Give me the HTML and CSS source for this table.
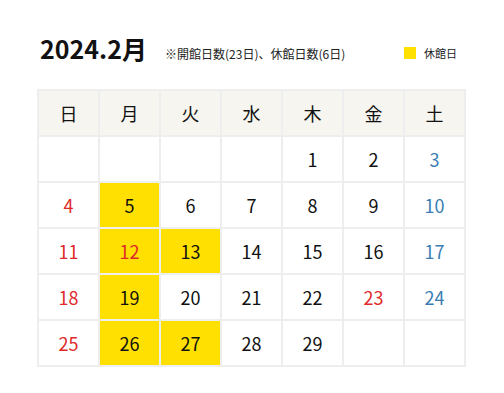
FILE: index.html
```html
<!DOCTYPE html>
<html lang="ja">
<head>
<meta charset="utf-8">
<link rel="stylesheet" href="styles.css">
</head>
<body>
<div class="cal">
  <div class="cal-head">
    <h1 class="cal-title">2024.2月</h1>
    <p class="cal-note">※開館日数(23日)、休館日数(6日)</p>
    <div class="legend"><span class="legend-box"></span><span>休館日</span></div>
  </div>
  <table class="grid">
    <thead>
      <tr><th>日</th><th>月</th><th>火</th><th>水</th><th>木</th><th>金</th><th>土</th></tr>
    </thead>
    <tbody>
      <tr><td></td><td></td><td></td><td></td><td>1</td><td>2</td><td class="sat">3</td></tr>
      <tr><td class="sun">4</td><td class="closed">5</td><td>6</td><td>7</td><td>8</td><td>9</td><td class="sat">10</td></tr>
      <tr><td class="sun">11</td><td class="closed sun">12</td><td class="closed">13</td><td>14</td><td>15</td><td>16</td><td class="sat">17</td></tr>
      <tr><td class="sun">18</td><td class="closed">19</td><td>20</td><td>21</td><td>22</td><td class="sun">23</td><td class="sat">24</td></tr>
      <tr><td class="sun">25</td><td class="closed">26</td><td class="closed">27</td><td>28</td><td>29</td><td></td><td></td></tr>
    </tbody>
  </table>
</div>
</body>
</html>
```

FILE: styles.css
```css
html, body {
  margin: 0;
  padding: 0;
  background: #fff;
}
body {
  font-family: "Noto Sans CJK JP", "Noto Sans", sans-serif;
  color: #111;
}
.cal {
  width: 429px;
  padding: 30px 0 0 37px;
}
.cal-head {
  display: flex;
  align-items: baseline;
  height: 59px;
}
.cal-title {
  margin: 0 0 0 3px;
  font-size: 25px;
  font-weight: 700;
  line-height: 36px;
  width: 125px;
}
.cal-note {
  margin: 0;
  font-size: 12px;
  color: #222;
}
.legend {
  margin-left: auto;
  margin-right: 9px;
  display: flex;
  align-items: center;
  gap: 8px;
  font-size: 11px;
  color: #222;
}
.legend-box {
  width: 12px;
  height: 12px;
  background: #ffe000;
}
.grid {
  width: 429px;
  border-collapse: collapse;
  table-layout: fixed;
}
.grid th, .grid td {
  border: 2px solid #eeeeee;
  text-align: center;
  height: 44px;
  padding: 0;
  font-size: 18px;
  font-weight: 400;
}
.grid th {
  background: #f7f5ef;
}
.grid td.sun { color: #e02a2a; }
.grid td.sat { color: #3a7db3; }
.grid td.closed { background: #ffe000; }
```
